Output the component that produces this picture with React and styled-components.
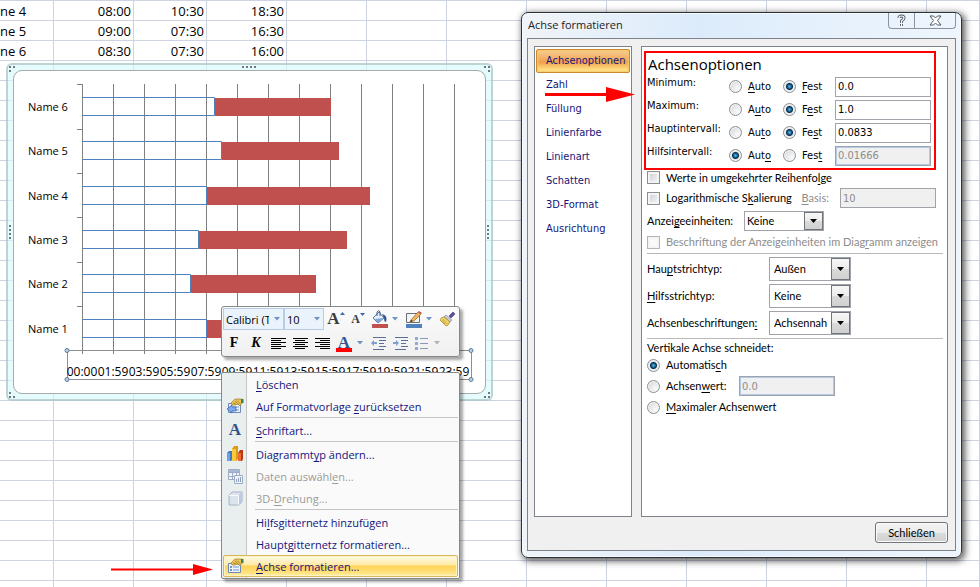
import React, { useState } from "react";
import styled, { createGlobalStyle, css } from "styled-components";

const fonts = {
  sheet: '"Open Sans", "Noto Sans", sans-serif',
  dialog: 'Lato, "Noto Sans", sans-serif',
  values: '"DejaVu Sans Condensed", "Noto Sans", sans-serif',
  serif: '"Liberation Serif", serif',
};

const colors = {
  gridLine: "#cdd3e2",
  navy: "#15157a",
  red: "#ff0000",
  bar: "#c0504d",
  outline: "#4f81bd",
  axis: "#808080",
};

const GlobalStyle = createGlobalStyle`
  * {
    box-sizing: border-box;
  }
  body {
    margin: 0;
    background: #fff;
    color: #000;
    font-family: ${fonts.sheet};
  }
  button, input, select {
    margin: 0;
    padding: 0;
    font: inherit;
    color: inherit;
  }
  u {
    text-underline-offset: 2px;
    text-decoration-thickness: 1px;
    text-decoration-skip-ink: none;
  }
`;

/* ---------- Tabelle ---------- */

const Page = styled.main`
  position: relative;
  height: 100vh;
  overflow: hidden;
`;

const Sheet = styled.table`
  width: 100%;
  table-layout: fixed;
  border-collapse: separate;
  border-spacing: 0;
  font-size: 13px;
  line-height: 18px;
`;

const Cell = styled.td`
  height: 20px;
  padding: 1px 2px 0 0;
  border-top: 1px solid ${colors.gridLine};
  border-right: 1px solid ${colors.gridLine};
  text-align: ${(props) => (props.$name ? "left" : "right")};
  white-space: nowrap;
`;

const columns = [54, 80, 73, 80, 80, 80, 80, 80, 80, 80, 80, 80];
const sheetRows = [
  ["ne 4", "08:00", "10:30", "18:30"],
  ["ne 5", "09:00", "07:30", "16:30"],
  ["ne 6", "08:30", "07:30", "16:00"],
];

const Spreadsheet = () => (
  <Sheet>
    <colgroup>
      {columns.map((width, i) => (
        <col key={i} style={{ width }} />
      ))}
      <col />
    </colgroup>
    <tbody>
      {Array.from({ length: 30 }, (_, r) => (
        <tr key={r}>
          {Array.from({ length: columns.length + 1 }, (_, c) => (
            <Cell key={c} $name={c === 0}>
              {sheetRows[r]?.[c]}
            </Cell>
          ))}
        </tr>
      ))}
    </tbody>
  </Sheet>
);

/* ---------- Diagramm ---------- */

const ChartFrame = styled.section`
  position: absolute;
  left: 6px;
  top: 63px;
  padding: 5px;
  border: 2px solid rgba(150, 172, 172, 0.5);
  border-radius: 6px;
  background: rgba(214, 250, 250, 0.6);
`;

const ChartArea = styled.div`
  border: 1px solid #a3abab;
  border-radius: 9px;
  background: #fff;
`;

const Plot = styled.svg`
  display: block;
  font-family: ${fonts.sheet};
  font-size: 11px;
`;

const Grip = styled.svg`
  position: absolute;
  fill: #6b7b80;
  ${(props) => props.$place}
`;

const bars = [
  { name: "Name 6", y: 98, start: 215, end: 331 },
  { name: "Name 5", y: 142, start: 222, end: 339 },
  { name: "Name 4", y: 187, start: 207, end: 370 },
  { name: "Name 3", y: 231, start: 199, end: 347 },
  { name: "Name 2", y: 275, start: 191, end: 316 },
  { name: "Name 1", y: 320, start: 207, end: 331 },
];

const times = [
  "00:00", "01:59", "03:59", "05:59", "07:59", "09:59", "11:59",
  "13:59", "15:59", "17:59", "19:59", "21:59", "23:59",
];

const gripPlaces = [
  css`left: 234px; top: 1px;`,
  css`left: 234px; bottom: 1px;`,
];

const sideGripPlaces = [
  css`left: 1px; top: 160px;`,
  css`right: 1px; top: 160px;`,
];

const cornerPlaces = [
  css`left: 1px; top: 1px;`,
  css`right: 1px; top: 1px; transform: scaleX(-1);`,
  css`left: 1px; bottom: 1px; transform: scaleY(-1);`,
  css`right: 1px; bottom: 1px; transform: scale(-1);`,
];

const Chart = () => (
  <ChartFrame>
    <ChartArea>
      <Plot width="471" height="322" viewBox="14 71 471 322">
        {times.map((t, i) => (
          <path key={t} d={`M${82.5 + i * 31} 84V354`} stroke={colors.axis} />
        ))}
        <path d="M82 350.5H455" stroke={colors.axis} />
        {[84, 129, 173, 217, 262, 306, 350].map((y) => (
          <path key={y} d={`M77 ${y + 0.5}H82`} stroke={colors.axis} />
        ))}
        {bars.map((b) => (
          <g key={b.name}>
            <path
              d={`M82 ${b.y - 0.5}H${b.start - 0.5}V${b.y + 17.5}H82`}
              fill="none"
              stroke={colors.outline}
            />
            <rect x={b.start} y={b.y} width={b.end - b.start} height="18" fill={colors.bar} />
            <text x="28" y={b.y + 13}>{b.name}</text>
          </g>
        ))}
        <rect x="67.5" y="350.5" width="404" height="29" fill="none" stroke="#8a8f94" />
        <g fontSize="12" textAnchor="middle">
          {times.map((t, i) => (
            <text key={t} x={82 + i * 31} y="376">{t}</text>
          ))}
        </g>
        <g fill="#b7d3ea" stroke="#5b7896">
          <circle cx="67" cy="350.5" r="2" />
          <circle cx="67" cy="379.5" r="2" />
          <circle cx="471" cy="350.5" r="2" />
          <circle cx="471" cy="379.5" r="2" />
        </g>
      </Plot>
    </ChartArea>
    {gripPlaces.map((place, i) => (
      <Grip key={i} $place={place} width="15" height="3">
        <path d="M0 0h2v2h-2zM4 0h2v2h-2zM8 0h2v2h-2zM12 0h2v2h-2z" />
      </Grip>
    ))}
    {sideGripPlaces.map((place, i) => (
      <Grip key={i} $place={place} width="3" height="15">
        <path d="M0 0h2v2h-2zM0 4h2v2h-2zM0 8h2v2h-2zM0 12h2v2h-2z" />
      </Grip>
    ))}
    {cornerPlaces.map((place, i) => (
      <Grip key={i} $place={place} width="6" height="6">
        <path d="M0 0h2v2h-2zM4 0h2v2h-2zM0 4h2v2h-2z" />
      </Grip>
    ))}
  </ChartFrame>
);

/* ---------- Minisymbolleiste ---------- */

const Toolbar = styled.div`
  position: absolute;
  left: 221px;
  top: 306px;
  width: 239px;
  padding: 0 1px 1px;
  border: 1px solid #86888c;
  border-radius: 3px;
  background: linear-gradient(#fbfbfb, #f0f0f1);
  box-shadow: 3px 3px 3px rgba(0, 0, 0, 0.35);
`;

const ToolRow = styled.div`
  display: flex;
  align-items: center;
  height: 24px;
`;

const Combo = styled.span`
  display: grid;
  grid-template-columns: ${(props) => props.$width}px;
  align-items: center;
  height: 22px;
  border: 1px solid #b5cbe6;
  background: #eaf2fb;
`;

const ComboSelect = styled.select`
  grid-area: 1 / 1;
  appearance: none;
  width: 100%;
  height: 20px;
  padding: 0 14px 0 2px;
  border: 0;
  background: none;
  font-size: 11px;
  text-overflow: clip;
`;

const CaretIcon = styled.svg`
  grid-area: 1 / 1;
  justify-self: end;
  margin-right: 3px;
  pointer-events: none;
`;

const ToolButton = styled.button`
  display: flex;
  flex: none;
  justify-content: center;
  align-items: center;
  width: ${(props) => props.$width}px;
  height: 22px;
  border: 0;
  background: none;
  font-family: ${fonts.serif};
  font-size: 14px;
  font-weight: bold;
  font-style: ${(props) => (props.$italic ? "italic" : "normal")};
`;

const Caret = ({ fill = "#6f93c4" }) => (
  <CaretIcon width="6" height="4" viewBox="0 0 6 4">
    <path d="M0 0H6L3 3.5Z" fill={fill} />
  </CaretIcon>
);

const Letter = styled.span`
  font-family: ${fonts.serif};
  font-weight: bold;
  font-size: ${(props) => props.$size}px;
  line-height: 18px;
  color: ${(props) => props.$color};
`;

const GrowIcon = ({ size, down }) => (
  <>
    <Letter $size={size} $color="#3c3c3c">A</Letter>
    <svg width="5" height="14" viewBox="0 0 5 14">
      <path d={down ? "M0 1H5L2.5 4Z" : "M0 3H5L2.5 0Z"} fill="#3f68a8" />
    </svg>
  </>
);

const BucketIcon = () => (
  <svg width="20" height="18" viewBox="0 0 20 18">
    <path d="M3 8L9 2L14 8L8 13Z" fill="#e4edf8" stroke="#5577a8" />
    <path d="M5 9L13 8L8 13Z" fill="#7fa4d6" />
    <path d="M7 6V2Q9 -1 10 2V6" fill="none" stroke="#44618c" />
    <path d="M12 4Q18 5 16 12Q14 12 14 8Z" fill="#31598f" />
    <rect x="2" y="14" width="16" height="4" fill={colors.bar} />
  </svg>
);

const PenIcon = () => (
  <svg width="17" height="18" viewBox="0 0 17 18">
    <path d="M1.500 3.500H14.500V12.500H1.500Z" fill="#f4f4f4" stroke="#6b6f75" />
    <path d="M6 10L13 2L16 4L9 11L5 12Z" fill="#f0b55c" stroke="#8a6228" strokeWidth=".7" />
    <path d="M13 2L14 1L17 3L16 4Z" fill="#c0504d" />
    <path d="M5 12L6 10L8 11Z" fill="#333" />
    <rect x="1" y="14" width="16" height="4" fill="#4f81bd" />
  </svg>
);

const BrushIcon = () => (
  <svg width="17" height="16" viewBox="0 0 17 16">
    <path d="M10 5L14 1L16 3L12 7Z" fill="#5c4fa0" stroke="#3c3370" strokeWidth=".6" />
    <path d="M7 4L13 9L11 11L5 6Z" fill="#c9ccd6" stroke="#777c8c" strokeWidth=".6" />
    <path d="M5 6L11 11Q9 15 7 15L1 9Q2 6 5 6Z" fill="#f3d66b" stroke="#a07d1e" strokeWidth=".7" />
    <path d="M4 8L8 13M3 9L6 13" stroke="#b8932c" strokeWidth=".7" />
  </svg>
);

const alignLines = {
  left: "M0 .5H15M0 2.500H10M0 4.500H15M0 6.500H10M0 8.500H15M0 10.500H10",
  center: "M0 .5H15M2 2.500H12M0 4.500H15M2 6.500H12M0 8.500H15M2 10.500H12",
  right: "M0 .5H15M5 2.500H15M0 4.500H15M5 6.500H15M0 8.500H15M5 10.500H15",
};

const AlignIcon = ({ align }) => (
  <svg width="15" height="11" viewBox="0 0 15 11">
    <path d={alignLines[align]} stroke="#000" />
  </svg>
);

const FontColorMark = styled.span`
  display: block;
  width: 16px;
  height: 18px;
  border-bottom: 4px solid #f00;
  line-height: 14px;
`;

const IndentIcon = ({ more }) => (
  <svg width="16" height="13" viewBox="0 0 16 13">
    <path d="M2 .5H15M8 3.500H15M8 6.500H13M8 9.500H15M2 12.500H13" stroke="#5b6f92" />
    <path d={more ? "M6 6L3 3V5H0V7H3V9Z" : "M0 6L3 3V5H6V7H3V9Z"} fill="#7f9fce" />
  </svg>
);

const ListIcon = () => (
  <svg width="14" height="13" viewBox="0 0 14 13">
    <path d="M5 1.500H13M5 6.500H13M5 11.500H13" stroke="#8a9ab5" />
    <path d="M0 0h3v3h-3zM0 5h3v3h-3zM0 10h3v3h-3z" fill="#8fa9d2" />
  </svg>
);

const MiniToolbar = () => (
  <Toolbar role="toolbar" aria-label="Format">
    <ToolRow>
      <Combo $width={59}>
        <ComboSelect aria-label="Schriftart">
          <option>Calibri (T</option>
        </ComboSelect>
        <Caret />
      </Combo>
      <Combo $width={38}>
        <ComboSelect aria-label="Schriftgrad">
          <option>10</option>
        </ComboSelect>
        <Caret />
      </Combo>
      <ToolButton $width={24} aria-label="Vergrößern"><GrowIcon size={17} /></ToolButton>
      <ToolButton $width={20} aria-label="Verkleinern"><GrowIcon size={12} down /></ToolButton>
      <ToolButton $width={24} aria-label="Fülleffekt"><BucketIcon /></ToolButton>
      <ToolButton $width={9} aria-label="Füllfarben"><Caret /></ToolButton>
      <ToolButton $width={25} aria-label="Formkontur"><PenIcon /></ToolButton>
      <ToolButton $width={9} aria-label="Konturfarben"><Caret /></ToolButton>
      <ToolButton $width={24} aria-label="Format übertragen"><BrushIcon /></ToolButton>
    </ToolRow>
    <ToolRow>
      <ToolButton $width={22}>F</ToolButton>
      <ToolButton $width={22} $italic>K</ToolButton>
      <ToolButton $width={22} aria-label="Links"><AlignIcon align="left" /></ToolButton>
      <ToolButton $width={22} aria-label="Zentriert"><AlignIcon align="center" /></ToolButton>
      <ToolButton $width={22} aria-label="Rechts"><AlignIcon align="right" /></ToolButton>
      <ToolButton $width={22} aria-label="Schriftfarbe">
        <FontColorMark><Letter $size={17} $color="#2f5597">A</Letter></FontColorMark>
      </ToolButton>
      <ToolButton $width={13} aria-label="Schriftfarben"><Caret /></ToolButton>
      <ToolButton $width={22} aria-label="Einzug verkleinern"><IndentIcon /></ToolButton>
      <ToolButton $width={22} aria-label="Einzug vergrößern"><IndentIcon more /></ToolButton>
      <ToolButton $width={20} aria-label="Aufzählung"><ListIcon /></ToolButton>
      <ToolButton $width={13} aria-label="Aufzählungszeichen"><Caret fill="#b0b0b0" /></ToolButton>
    </ToolRow>
  </Toolbar>
);

/* ---------- Kontextmenü ---------- */

const Menu = styled.div`
  position: absolute;
  left: 221px;
  top: 372px;
  width: 239px;
  padding: 0 1px 1px;
  border: 1px solid #86888c;
  border-radius: 2px;
  background: linear-gradient(90deg, #e9eeee 24px, #c5c5c5 24px, #c5c5c5 25px, #fafafa 25px);
  box-shadow: 3px 3px 3px rgba(0, 0, 0, 0.35);
  font-size: 11px;
  color: ${colors.navy};
`;

const MenuItem = styled.button`
  display: grid;
  grid-template-columns: 22px 1fr;
  column-gap: 10px;
  align-items: center;
  width: 100%;
  height: 22px;
  border: 1px solid transparent;
  border-radius: 2px;
  background: none;
  text-align: left;
  white-space: nowrap;

  &:disabled {
    color: #9b9b9b;
  }

  ${(props) =>
    props.$active &&
    css`
      border-color: #d9b65c;
      background: linear-gradient(#fffbe8, #ffe9a6 45%, #ffd255 50%, #ffe07a 80%, #fff0a8);
      box-shadow: inset 0 0 0 1px #fff3c4;
    `}
`;

const IconSlot = styled.span`
  display: flex;
  justify-content: center;
`;

const MenuLine = styled.hr`
  height: 1px;
  margin: 0 0 1px 32px;
  border: 0;
  background: #c5c5c5;
`;

const PropertiesIcon = ({ reset }) => (
  <svg width="17" height="16" viewBox="0 0 17 16">
    <path d="M1.500 5.500H13.500V14.500H1.500Z" fill="#eef3fb" stroke="#6d89b8" />
    <path d="M3 8h2v2h-2zM3 11h2v2h-2zM6 8.500H12V9.500H6ZM6 11.500H12V12.500H6Z" fill="#7b96c2" />
    <path d="M4 5L8 1H15V5L13 8L11 6L8 7L5 7Z" fill="#edc452" stroke="#8f7426" strokeWidth=".6" />
    <path d="M8 3L12 7M10 2.500L13.500 6M6 5L9 6" stroke="#7a6424" strokeWidth=".6" />
    <path d="M14 1H16.500V5H14Z" fill="#3f7f5a" />
    {reset && <path d="M0 11L5 7V9H9V13H5V15Z" fill="#7faaf0" stroke="#2f5fae" strokeWidth=".7" />}
  </svg>
);

const ChartTypeIcon = () => (
  <svg width="17" height="16" viewBox="0 0 17 16">
    <path d="M0 7L2 5H5V14L4 15H0Z" fill="#3f78c4" />
    <path d="M0 7H3V15H0Z" fill="#6fa0e0" />
    <path d="M5 3L7 0H11V13L9 15H5Z" fill="#e09a10" />
    <path d="M5 3H9V15H5Z" fill="#fcc93c" />
    <path d="M11 7L13 4H16V13L15 15H11Z" fill="#b83a12" />
    <path d="M11 7H14V15H11Z" fill="#ee6a35" />
  </svg>
);

const DataIcon = () => (
  <svg width="17" height="16" viewBox="0 0 17 16">
    <path d="M1.500 1.500H12.500V11.500H1.500ZM1.500 4.500H12.500M1.500 8.500H12.500M5.500 1.500V11.500M9.500 1.500V11.500" fill="#f0f3f8" stroke="#9fadc4" />
    <path d="M2 2H12V4H2Z" fill="#a9b8d2" />
    <path d="M7.500 7.500H15.500V15.500H7.500Z" fill="#eef2f8" stroke="#9fadc4" />
    <path d="M9 11h1v3h-1zM11 10h1v4h-1zM13 9h1v5h-1z" fill="#8fa0bd" />
  </svg>
);

const CubeIcon = () => (
  <svg width="15" height="15" viewBox="0 0 15 15">
    <path d="M1 4.500L4 1H14V10.500L11 14H1Z" fill="#dbe3ef" stroke="#a6b4ca" />
    <path d="M1 4.500H10.500V14" fill="none" stroke="#f7f9fc" />
    <path d="M11 4L14 1V10.500L11 14Z" fill="#bccadf" />
  </svg>
);

const ContextMenu = () => (
  <Menu role="menu">
    <MenuItem role="menuitem"><IconSlot /><span><u>L</u>öschen</span></MenuItem>
    <MenuItem role="menuitem">
      <IconSlot><PropertiesIcon reset /></IconSlot>
      <span>Auf Formatvorlage <u>z</u>urücksetzen</span>
    </MenuItem>
    <MenuLine />
    <MenuItem role="menuitem">
      <IconSlot><Letter $size={17} $color="#33538a">A</Letter></IconSlot>
      <span><u>S</u>chriftart...</span>
    </MenuItem>
    <MenuLine />
    <MenuItem role="menuitem">
      <IconSlot><ChartTypeIcon /></IconSlot>
      <span>Diagrammt<u>y</u>p ändern...</span>
    </MenuItem>
    <MenuItem role="menuitem" disabled>
      <IconSlot><DataIcon /></IconSlot>
      <span>Daten auswähl<u>e</u>n...</span>
    </MenuItem>
    <MenuItem role="menuitem" disabled>
      <IconSlot><CubeIcon /></IconSlot>
      <span>3D-<u>D</u>rehung...</span>
    </MenuItem>
    <MenuLine />
    <MenuItem role="menuitem"><IconSlot /><span>Hi<u>l</u>fsgitternetz hinzufügen</span></MenuItem>
    <MenuItem role="menuitem"><IconSlot /><span>Haupt<u>g</u>itternetz formatieren...</span></MenuItem>
    <MenuItem role="menuitem" $active>
      <IconSlot><PropertiesIcon /></IconSlot>
      <span><u>A</u>chse formatieren...</span>
    </MenuItem>
  </Menu>
);

/* ---------- Dialog ---------- */

const Window = styled.section`
  position: absolute;
  left: 521px;
  top: 12px;
  width: 441px;
  padding: 0 5px 6px 5px;
  border: 1px solid #2c3238;
  border-radius: 7px;
  background: linear-gradient(90deg, #f0f4f8, #dcebfb 40%, #e6f1fc 70%, #eef5fc);
  box-shadow: inset 0 0 0 1px #f6fbff, 2px 2px 7px 1px rgba(0, 0, 0, 0.65);
  font-family: ${fonts.dialog};
  font-size: 11px;
  line-height: 14px;
`;

const TitleBar = styled.header`
  display: flex;
  justify-content: space-between;
  height: 25px;
`;

const Title = styled.h1`
  margin: 0;
  padding-left: 1px;
  font-family: ${fonts.sheet};
  font-size: 11px;
  font-weight: normal;
  line-height: 24px;
  color: #222;
`;

const TitleButtons = styled.div`
  display: flex;
  height: 16px;
  border: 1px solid #8b949e;
  border-top: 0;
  border-radius: 0 0 4px 4px;
`;

const TitleButton = styled.button`
  display: flex;
  justify-content: center;
  align-items: center;
  width: ${(props) => props.$width}px;
  border: 0;
  background: none;

  & + & {
    border-left: 1px solid #8b949e;
  }
`;

const Body = styled.div`
  padding: 7px 7px 7px 6px;
  border: 1px solid #7d838b;
  background: #f0f0f0;
`;

const Panes = styled.div`
  display: grid;
  grid-template-columns: 98px minmax(0, 1fr);
  column-gap: 9px;
  min-height: 471px;
`;

const Nav = styled.nav`
  padding: 2px 1px 1px;
  border: 1px solid #7d838b;
  background: #fff;
  font-family: ${fonts.values};
`;

const NavLink = styled.a`
  display: block;
  padding: 0 9px;
  border: 1px solid transparent;
  border-radius: 2px;
  line-height: 22px;
  color: ${colors.navy};
  text-decoration: none;
  white-space: nowrap;

  ${(props) =>
    props.$active &&
    css`
      border-color: #c98a2e;
      background: linear-gradient(#f7cf9a, #f2a95a 45%, #f0a04a 55%, #fdd87a 85%, #fff0a0);
      box-shadow: inset 0 0 2px 1px #f6c765;
    `}
`;

const Content = styled.div`
  display: flex;
  flex-direction: column;
  gap: 3px;
  border: 1px solid #7d838b;
  background: #fff;
  white-space: nowrap;
`;

const Highlight = styled.div`
  margin: 4px 11px -3px 2px;
  padding-bottom: 1px;
  border: 2px solid #f00;
`;

const Heading = styled.h2`
  margin: 0;
  padding-left: 2px;
  font-family: ${fonts.sheet};
  font-size: 15px;
  font-weight: normal;
  line-height: 22px;
`;

const ValueRow = styled.div`
  display: grid;
  grid-template-columns: 83px 54px 52px 1fr;
  align-items: center;
  height: 23px;
  padding-right: 3px;
  font-family: ${fonts.values};
`;

const RowName = styled.span`
  align-self: start;
  padding: 1px 0 0 1px;
`;

const Choice = styled.label`
  display: flex;
  align-items: center;
  gap: 6px;
  height: ${(props) => props.$height || 20}px;
  color: ${(props) => (props.$disabled ? "#8d8d8d" : "#000")};
`;

const Radio = styled.input`
  appearance: none;
  flex: none;
  width: 13px;
  height: 13px;
  border: 1px solid #8a8f94;
  border-radius: 50%;
  background: radial-gradient(circle at 70% 70%, #fafafa, #cfd3d6);
  box-shadow: inset 0 0 0 1px #f6f6f6;

  &:checked {
    background: radial-gradient(circle, #5fc0e8 0, #12608f 2px, #0d2c4a 3px, #dfe5e9 4px);
  }
`;

const Check = styled.input`
  appearance: none;
  flex: none;
  width: 13px;
  height: 13px;
  border: 1px solid #8a8f94;
  background: linear-gradient(135deg, #c9cdd2, #f8f8f8);
  box-shadow: inset 0 0 0 2px #f4f4f4;

  &:disabled {
    border-color: #b5b5b5;
    background: #fafafa;
  }
`;

const TextBox = styled.input`
  width: 96px;
  height: 20px;
  padding: 0 2px;
  border: 1px solid #a0a4aa;
  background: #fff;
  font-family: ${fonts.values};

  &:disabled {
    color: #8d8d8d;
    background: #f0f0f0;
  }

  ${(props) =>
    props.$glow &&
    css`
      box-shadow: inset 0 0 0 1px #b3cbe8;
    `}
`;

const Line = styled.div`
  display: flex;
  align-items: center;
  gap: ${(props) => props.$gap || 0}px;
  height: 20px;
  padding: 0 11px 0 5px;
`;

const CheckLine = styled(Line)`
  height: ${(props) => props.$height}px;
`;

const Basis = styled.label`
  display: flex;
  align-items: center;
  gap: 11px;
  margin-left: auto;
  color: #8d8d8d;
`;

const SelectLine = styled.div`
  display: grid;
  grid-template-columns: 122px 82px;
  align-items: center;
  padding-left: 5px;
`;

const UnitLine = styled(SelectLine)`
  grid-template-columns: 97px 80px;
`;

const SelectBox = styled.span`
  display: grid;
  grid-template-columns: 1fr 19px;
  height: ${(props) => props.$height}px;
  border: 1px solid #a0a4aa;
`;

const Select = styled.select`
  grid-area: 1 / 1 / 2 / 3;
  appearance: none;
  padding: 0 20px 0 ${(props) => props.$indent}px;
  border: 0;
  background: none;
  text-overflow: clip;
`;

const SelectArrow = styled.span`
  grid-area: 1 / 2;
  display: flex;
  justify-content: center;
  align-items: center;
  border: 1px solid #70757b;
  background: linear-gradient(#f6f6f6, #ececec 50%, #dadada 50%, #d0d0d0);
  pointer-events: none;
`;

const Rule = styled.hr`
  width: 296px;
  height: 1px;
  margin: 0 0 0 5px;
  border: 0;
  background: #b8b8b8;
`;

const Group = styled.div`
  display: flex;
  flex-direction: column;
  gap: 1px;
  padding-left: 5px;
`;

const GroupName = styled.span`
  line-height: 12px;
`;

const Crossing = styled.div`
  display: grid;
  grid-template-columns: 80px 96px;
  column-gap: 12px;
  align-items: center;
`;

const Footer = styled.footer`
  display: flex;
  justify-content: flex-end;
  padding-top: 5px;
`;

const CloseButton = styled.button`
  width: 73px;
  height: 21px;
  border: 1px solid #70757b;
  border-radius: 3px;
  background: linear-gradient(#f4f4f4, #ebebeb 50%, #dcdcdc 50%, #d0d0d0);
  box-shadow: inset 0 0 0 1px #fbfbfb;
`;

const navItems = [
  "Achsenoptionen", "Zahl", "Füllung", "Linienfarbe",
  "Linienart", "Schatten", "3D-Format", "Ausrichtung",
];

const axisValues = [
  { id: "min", name: "Minimum:", auto: <><u>A</u>uto</>, fixed: <><u>F</u>est</>, value: "0.0", mode: "fest" },
  { id: "max", name: "Maximum:", auto: <>A<u>u</u>to</>, fixed: <>F<u>e</u>st</>, value: "1.0", mode: "fest" },
  { id: "major", name: "Hauptintervall:", auto: <>Au<u>t</u>o</>, fixed: <>Fe<u>s</u>t</>, value: "0.0833", mode: "fest" },
  { id: "minor", name: "Hilfsintervall:", auto: <>Aut<u>o</u></>, fixed: <>Fes<u>t</u></>, value: "0.01666", mode: "auto" },
];

const AxisValue = ({ item }) => {
  const [mode, setMode] = useState(item.mode);
  const [value, setValue] = useState(item.value);

  return (
    <ValueRow role="group" aria-label={item.name}>
      <RowName>{item.name}</RowName>
      <Choice>
        <Radio type="radio" name={item.id} checked={mode === "auto"} onChange={() => setMode("auto")} />
        <span>{item.auto}</span>
      </Choice>
      <Choice>
        <Radio type="radio" name={item.id} checked={mode === "fest"} onChange={() => setMode("fest")} />
        <span>{item.fixed}</span>
      </Choice>
      <TextBox
        aria-label={item.name}
        value={value}
        disabled={mode === "auto"}
        $glow={mode === "auto"}
        onChange={(e) => setValue(e.target.value)}
      />
    </ValueRow>
  );
};

const DropDown = ({ id, value, height = 24, indent = 4 }) => (
  <SelectBox $height={height}>
    <Select id={id} $indent={indent}>
      <option>{value}</option>
    </Select>
    <SelectArrow>
      <svg width="7" height="4" viewBox="0 0 7 4">
        <path d="M0 0H7L3.500 4Z" fill="#000" />
      </svg>
    </SelectArrow>
  </SelectBox>
);

const FormatDialog = () => {
  const [crossing, setCrossing] = useState("auto");

  return (
    <Window role="dialog" aria-label="Achse formatieren">
      <TitleBar>
        <Title>Achse formatieren</Title>
        <TitleButtons>
          <TitleButton $width={25} aria-label="Hilfe">
            <svg width="9" height="13" viewBox="0 0 9 13">
              <path d="M2 4Q2 2 4.500 2Q7 2 7 4Q7 5.500 4.500 7V9M4.500 10V12" fill="none" stroke="#555b62" strokeWidth="3" />
              <path d="M2 4Q2 2 4.500 2Q7 2 7 4Q7 5.500 4.500 7V9M4.500 10V12" fill="none" stroke="#fff" strokeWidth="1.200" />
            </svg>
          </TitleButton>
          <TitleButton $width={41} aria-label="Fenster schließen">
            <svg width="13" height="11" viewBox="0 0 13 11">
              <path d="M1 1H4.500L6.500 3L8.500 1H12L8.500 5.500L12 10H8.500L6.500 8L4.500 10H1L4.500 5.500Z" fill="#fff" stroke="#555b62" />
            </svg>
          </TitleButton>
        </TitleButtons>
      </TitleBar>
      <Body>
        <Panes>
          <Nav>
            {navItems.map((item, i) => (
              <NavLink key={item} href="#" $active={i === 0}>{item}</NavLink>
            ))}
          </Nav>
          <Content>
            <Highlight>
              <Heading>Achsenoptionen</Heading>
              {axisValues.map((item) => (
                <AxisValue key={item.id} item={item} />
              ))}
            </Highlight>
            <CheckLine $height={15}>
              <Choice $height={15}>
                <Check type="checkbox" />
                <span>Werte in umgekehrter Reihenfo<u>l</u>ge</span>
              </Choice>
            </CheckLine>
            <Line>
              <Choice>
                <Check type="checkbox" />
                <span>Logarithmische S<u>k</u>alierung</span>
              </Choice>
              <Basis>
                <span><u>B</u>asis:</span>
                <TextBox disabled defaultValue="10" />
              </Basis>
            </Line>
            <UnitLine>
              <label htmlFor="units">Anzei<u>g</u>eeinheiten:</label>
              <DropDown id="units" value="Keine" height={20} indent={2} />
            </UnitLine>
            <CheckLine $height={16}>
              <Choice $height={16} $disabled>
                <Check type="checkbox" disabled />
                <span>Beschriftung der Anzeigeinheiten im Diag<u>r</u>amm anzeigen</span>
              </Choice>
            </CheckLine>
            <Rule />
            <SelectLine>
              <label htmlFor="majorTick">Hau<u>p</u>tstrichtyp:</label>
              <DropDown id="majorTick" value="Außen" />
            </SelectLine>
            <SelectLine>
              <label htmlFor="minorTick"><u>H</u>ilfsstrichtyp:</label>
              <DropDown id="minorTick" value="Keine" />
            </SelectLine>
            <SelectLine>
              <label htmlFor="axisLabels">Achsenbeschriftungen<u>:</u></label>
              <DropDown id="axisLabels" value="Achsennah" />
            </SelectLine>
            <Rule />
            <Group role="radiogroup" aria-label="Vertikale Achse schneidet">
              <GroupName>Vertikale Achse schneidet:</GroupName>
              <Choice>
                <Radio type="radio" name="crossing" checked={crossing === "auto"} onChange={() => setCrossing("auto")} />
                <span>Automatis<u>c</u>h</span>
              </Choice>
              <Crossing>
                <Choice>
                  <Radio type="radio" name="crossing" checked={crossing === "value"} onChange={() => setCrossing("value")} />
                  <span>Achsen<u>w</u>ert:</span>
                </Choice>
                <TextBox aria-label="Achsenwert" defaultValue="0.0" disabled={crossing !== "value"} $glow />
              </Crossing>
              <Choice>
                <Radio type="radio" name="crossing" checked={crossing === "max"} onChange={() => setCrossing("max")} />
                <span><u>M</u>aximaler Achsenwert</span>
              </Choice>
            </Group>
          </Content>
        </Panes>
        <Footer>
          <CloseButton>Schließen</CloseButton>
        </Footer>
      </Body>
    </Window>
  );
};

/* ---------- Pfeile ---------- */

const Arrow = styled.svg`
  position: absolute;
  left: ${(props) => props.$left}px;
  top: ${(props) => props.$top}px;
  fill: ${colors.red};
  pointer-events: none;
`;

const App = () => (
  <>
    <GlobalStyle />
    <Page>
      <Spreadsheet />
      <Chart />
      <MiniToolbar />
      <ContextMenu />
      <FormatDialog />
      <Arrow $left={545} $top={87} width="90" height="15">
        <path d="M0 6H61V0L90 7.500L61 15V9H0Z" />
      </Arrow>
      <Arrow $left={111} $top={564} width="103" height="11">
        <path d="M0 4.500H82V0L102 5.500L82 11V6.500H0Z" />
      </Arrow>
    </Page>
  </>
);

export default App;
